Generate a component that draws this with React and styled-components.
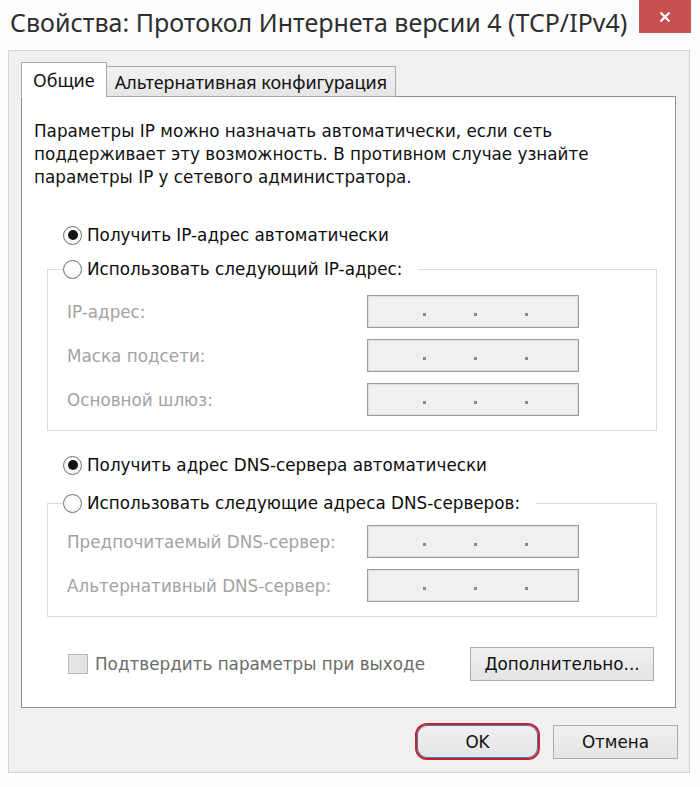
import React from 'react';
import styled, { createGlobalStyle } from 'styled-components';

const GlobalStyle = createGlobalStyle`
  html, body {
    margin: 0;
    padding: 0;
    background: #ffffff;
  }
  body {
    font-family: "DejaVu Sans", Tahoma, sans-serif;
    width: 700px;
    height: 787px;
    overflow: hidden;
  }
`;

const Window = styled.div`
  width: 700px;
  height: 787px;
  background: #fdfdfd;
  display: flex;
  flex-direction: column;
`;

const TitleBar = styled.div`
  height: 50px;
  display: flex;
  align-items: flex-start;
  justify-content: space-between;
  padding-right: 9px;
`;

const Title = styled.div`
  font-family: "Noto Sans", "Open Sans", sans-serif;
  font-size: 25px;
  color: #2e2e2e;
  margin: 5px 0 0 10px;
  white-space: nowrap;
`;

const CloseButton = styled.div`
  width: 52px;
  height: 33px;
  flex: none;
  background: #c75050;
  display: flex;
  align-items: center;
  justify-content: center;
`;

const Frame = styled.div`
  margin-left: 8px;
  width: 682px;
  height: 723px;
  box-sizing: border-box;
  border: 1px solid #d4d4d4;
  background: #f0f0f0;
  padding: 12px 0 0 12px;
  display: flex;
  flex-direction: column;
`;

const TabStrip = styled.div`
  display: flex;
  align-items: flex-end;
  height: 34px;
  margin-bottom: -1px;
  position: relative;
  z-index: 1;
`;

const Tab = styled.div`
  box-sizing: border-box;
  height: ${p => (p.$active ? 35 : 31)}px;
  padding: 0 ${p => (p.$active ? 11 : 8)}px;
  border: 1px solid #a9a9a9;
  border-bottom: ${p => (p.$active ? '1px solid #ffffff' : '1px solid #a9a9a9')};
  margin-left: ${p => (p.$active ? 0 : -1)}px;
  background: ${p => (p.$active ? '#ffffff' : 'linear-gradient(#f2f2f2, #e5e5e5)')};
  display: flex;
  align-items: center;
  font-family: "Noto Sans", "Open Sans", sans-serif;
  font-size: 18px;
  color: #111;
`;

const Panel = styled.div`
  width: 655px;
  height: 612px;
  box-sizing: border-box;
  background: #ffffff;
  border: 1px solid #8f9090;
  padding: 23px 0 0 12px;
  display: flex;
  flex-direction: column;
`;

const Intro = styled.p`
  margin: 0;
  font-size: 16.8px;
  line-height: 23px;
  color: #111;
  white-space: nowrap;
`;

const RadioRow = styled.label`
  display: flex;
  align-items: center;
  height: 24px;
  margin-top: ${p => p.$top || 0}px;
  margin-left: 29px;
  font-size: 16.8px;
  color: #0d0d0d;
  white-space: nowrap;
`;

const RadioCircle = styled.span`
  width: 19px;
  height: 19px;
  box-sizing: border-box;
  border-radius: 50%;
  border: 1.5px solid #6f6f6f;
  background: radial-gradient(circle at 50% 40%, #ffffff 40%, #e9e9e9 100%);
  display: flex;
  align-items: center;
  justify-content: center;
  margin-right: 5px;
  flex: none;

  &::after {
    content: '';
    width: 10px;
    height: 10px;
    border-radius: 50%;
    background: ${p => (p.$checked ? '#141414' : 'transparent')};
  }
`;

const Group = styled.fieldset`
  margin: ${p => p.$top || 0}px 0 0 13px;
  width: 610px;
  box-sizing: border-box;
  border: 1px solid #dcdcdc;
  padding: 0 0 14px 0;
  min-width: 0;
`;

const Legend = styled.legend`
  padding: 0 16px 0 0;
  margin-left: 15px;
  background: #fff;
  & > ${RadioRow} {
    margin-left: 0;
  }
`;

const FieldRow = styled.div`
  display: flex;
  align-items: center;
  justify-content: space-between;
  box-sizing: border-box;
  height: 33px;
  margin-top: ${p => p.$top}px;
  padding-left: 19px;
  width: 531px;
`;

const FieldLabel = styled.span`
  font-size: 16.8px;
  color: #a3a3a3;
`;

const IpBox = styled.div`
  width: 212px;
  height: 33px;
  box-sizing: border-box;
  border: 1px solid #9c9c9c;
  box-shadow: inset 0 0 0 1px #dedede;
  background: #f0f0f0;
  display: flex;
  align-items: flex-end;
  padding: 0 0 11px 55px;
  gap: 48px;
`;

const Dot = styled.span`
  width: 3px;
  height: 3px;
  background: #8a8a8a;
`;

const BottomRow = styled.div`
  display: flex;
  align-items: center;
  justify-content: space-between;
  margin-top: ${p => p.$top}px;
  padding: 0 21px 0 34px;
`;

const Check = styled.label`
  display: flex;
  align-items: center;
  font-size: 16.8px;
  color: #6b6b6b;
`;

const CheckBox = styled.span`
  width: 20px;
  height: 20px;
  box-sizing: border-box;
  border: 1px solid #b8b8b8;
  background: #e4e4e4;
  margin-right: 7px;
`;

const Button = styled.div`
  box-sizing: border-box;
  width: ${p => p.$w}px;
  height: ${p => p.$h || 34}px;
  border: 1px solid #acacac;
  background: linear-gradient(#f0f0f0, #e5e5e5);
  display: flex;
  align-items: center;
  justify-content: center;
  font-size: 16.8px;
  color: #111;
`;

const DefaultButton = styled(Button)`
  border: 2px solid #cc2030;
  border-radius: 12px;
  box-shadow: inset 0 0 0 1px #3c7fb1;
`;

const Footer = styled.div`
  display: flex;
  justify-content: flex-end;
  align-items: center;
  gap: 13px;
  padding-right: 11px;
  margin-top: 15px;
`;

function Radio({ checked, children, top }) {
  return (
    <RadioRow $top={top}>
      <RadioCircle $checked={checked} />
      {children}
    </RadioRow>
  );
}

function IpField({ label, top }) {
  return (
    <FieldRow $top={top}>
      <FieldLabel>{label}</FieldLabel>
      <IpBox>
        <Dot />
        <Dot />
        <Dot />
      </IpBox>
    </FieldRow>
  );
}

export default function App() {
  return (
    <Window>
      <GlobalStyle />
      <TitleBar>
        <Title>Свойства: Протокол Интернета версии 4 (TCP/IPv4)</Title>
        <CloseButton>
          <svg width="12" height="12" viewBox="0 0 12 12">
            <path d="M1.5 1.5 L10.5 10.5 M10.5 1.5 L1.5 10.5" stroke="#fff" strokeWidth="2.2" />
          </svg>
        </CloseButton>
      </TitleBar>
      <Frame>
        <TabStrip>
          <Tab $active>Общие</Tab>
          <Tab>Альтернативная конфигурация</Tab>
        </TabStrip>
        <Panel>
          <Intro>
            Параметры IP можно назначать автоматически, если сеть<br />
            поддерживает эту возможность. В противном случае узнайте<br />
            параметры IP у сетевого администратора.
          </Intro>
          <Radio checked top={34}>Получить IP-адрес автоматически</Radio>
          <Group $top={10}>
            <Legend>
              <Radio>Использовать следующий IP-адрес:</Radio>
            </Legend>
            <IpField label="IP-адрес:" top={14} />
            <IpField label="Маска подсети:" top={11} />
            <IpField label="Основной шлюз:" top={11} />
          </Group>
          <Radio checked top={22}>Получить адрес DNS-сервера автоматически</Radio>
          <Group $top={14}>
            <Legend>
              <Radio>Использовать следующие адреса DNS-серверов:</Radio>
            </Legend>
            <IpField label="Предпочитаемый DNS-сервер:" top={10} />
            <IpField label="Альтернативный DNS-сервер:" top={11} />
          </Group>
          <BottomRow $top={30}>
            <Check>
              <CheckBox />
              Подтвердить параметры при выходе
            </Check>
            <Button $w={184} $h={34}>Дополнительно...</Button>
          </BottomRow>
        </Panel>
        <Footer>
          <DefaultButton $w={125} $h={37}>OK</DefaultButton>
          <Button $w={125} $h={34}>Отмена</Button>
        </Footer>
      </Frame>
    </Window>
  );
}
